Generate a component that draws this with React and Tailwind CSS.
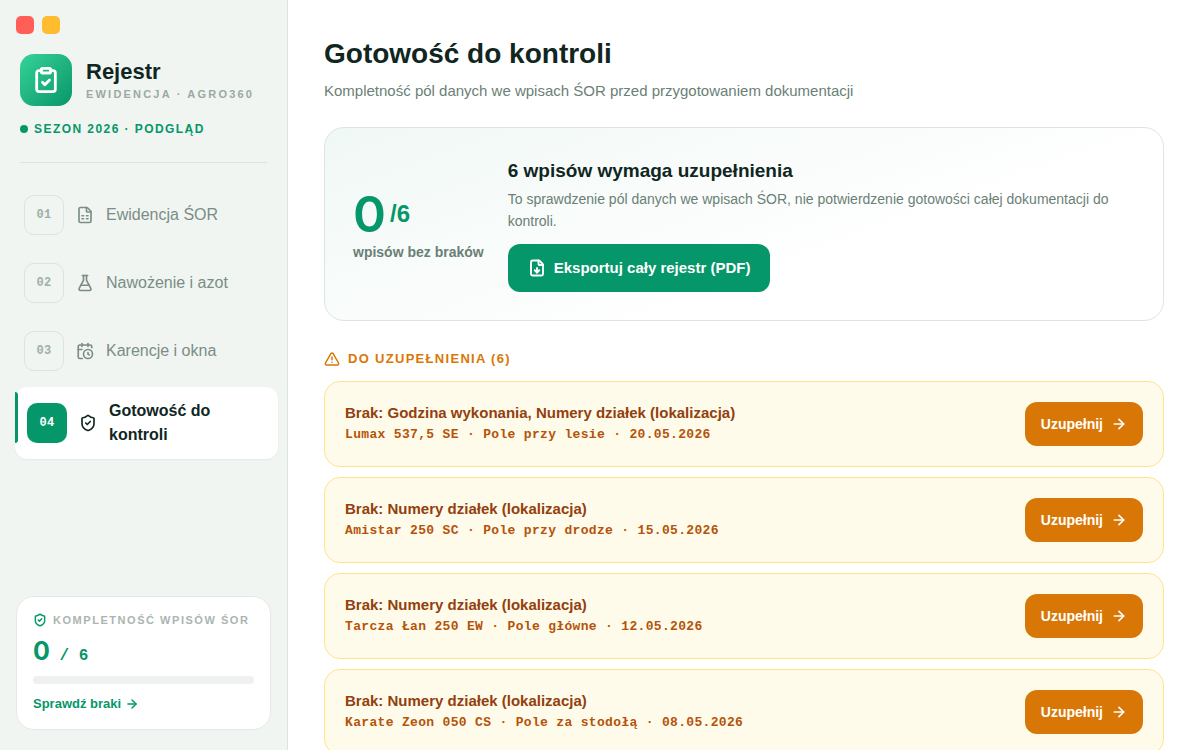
import React from "react";
import {
  ArrowRight,
  CalendarClock,
  ClipboardCheck,
  FileDown,
  FileSpreadsheet,
  FlaskConical,
  ShieldCheck,
  TriangleAlert,
} from "lucide-react";

const NAV_ITEMS = [
  { no: "01", label: "Ewidencja ŚOR", icon: FileSpreadsheet },
  { no: "02", label: "Nawożenie i azot", icon: FlaskConical },
  { no: "03", label: "Karencje i okna", icon: CalendarClock },
  { no: "04", label: "Gotowość do kontroli", icon: ShieldCheck, active: true },
];

const ENTRIES = [
  {
    missing: "Godzina wykonania, Numery działek (lokalizacja)",
    details: "Lumax 537,5 SE · Pole przy lesie · 20.05.2026",
  },
  {
    missing: "Numery działek (lokalizacja)",
    details: "Amistar 250 SC · Pole przy drodze · 15.05.2026",
  },
  {
    missing: "Numery działek (lokalizacja)",
    details: "Tarcza Łan 250 EW · Pole główne · 12.05.2026",
  },
  {
    missing: "Numery działek (lokalizacja)",
    details: "Karate Zeon 050 CS · Pole za stodołą · 08.05.2026",
  },
];

const COMPLETE = 0;
const TOTAL = 6;

function NavItem({ no, label, icon: Icon, active }) {
  return (
    <li>
      <a
        href="#"
        aria-current={active ? "page" : undefined}
        className={
          active
            ? "relative flex items-center gap-3 rounded-xl bg-white py-3 pr-4 pl-3 font-bold text-[#10261f] shadow-xs"
            : "flex items-center gap-3 rounded-xl py-3 pr-4 pl-[9px] text-[#7b8d85]"
        }
      >
        {active && (
          <span className="absolute top-[5px] left-0 h-[51px] w-[3px] rounded-r-full bg-[#059669]" />
        )}
        <span
          className={
            active
              ? "flex size-10 shrink-0 items-center justify-center rounded-[10px] bg-[#059669] font-['Liberation_Mono',monospace] text-xs font-bold tracking-wide text-white"
              : "flex size-10 shrink-0 items-center justify-center rounded-[10px] border border-[#dbe3df] font-['Liberation_Mono',monospace] text-xs font-bold tracking-wide text-[#9fb0a8]"
          }
        >
          {no}
        </span>
        <Icon className="size-[18px] shrink-0" strokeWidth={2.2} />
        <span className="text-base">{label}</span>
      </a>
    </li>
  );
}

function Sidebar() {
  return (
    <aside className="flex h-full w-72 shrink-0 flex-col border-r border-[#dbe3df] bg-[#f0f5f2]">
      <div className="flex gap-2 px-4 pt-4">
        <span className="size-[18px] rounded-[5px] bg-[#ff5f57]" />
        <span className="size-[18px] rounded-[5px] bg-[#febc2e]" />
      </div>

      <div className="mx-5 border-b border-[#dbe3df] pt-5 pb-6">
        <div className="flex items-center gap-[14px]">
          <span className="flex size-[52px] items-center justify-center rounded-[14px] bg-linear-to-br from-[#34d399] to-[#059669] text-white">
            <ClipboardCheck className="size-7" strokeWidth={2.4} />
          </span>
          <div>
            <div className="text-[22px] leading-7 font-bold text-[#10261f]">Rejestr</div>
            <div className="text-[11px] leading-4 font-bold tracking-[0.2em] text-[#9aaaa2]">
              EWIDENCJA · AGRO360
            </div>
          </div>
        </div>
        <div className="mt-[14px] flex items-center gap-[6px] text-xs leading-[18px] font-bold tracking-[0.12em] text-[#059669]">
          <span className="size-2 rounded-full bg-[#059669]" />
          SEZON 2026 · PODGLĄD
        </div>
      </div>

      <nav className="flex-1 pt-5 pr-[9px] pl-[15px]">
        <ul className="flex flex-col gap-1">
          {NAV_ITEMS.map((item) => (
            <NavItem key={item.no} {...item} />
          ))}
        </ul>
      </nav>

      <section className="mx-4 mb-5 rounded-[18px] border border-[#e3eae6] bg-white px-4 pt-4 pb-[15px]">
        <div className="flex items-center gap-[6px] text-[11px] leading-[14px] font-bold tracking-[0.14em] whitespace-nowrap text-[#aab5b0]">
          <ShieldCheck className="size-[14px] shrink-0 text-[#059669]" strokeWidth={2.5} />
          KOMPLETNOŚĆ WPISÓW ŚOR
        </div>
        <div className="mt-2 font-['Inter',sans-serif] text-[25px] leading-[33px] font-bold text-[#059669]">
          {COMPLETE}
          <span className="font-['Liberation_Mono',monospace] text-base whitespace-pre"> / {TOTAL}</span>
        </div>
        <div className="mt-2 h-2 rounded-full bg-[#eff1f0]">
          <div
            className="h-2 rounded-full bg-[#059669]"
            style={{ width: `${(COMPLETE / TOTAL) * 100}%` }}
          />
        </div>
        <a href="#" className="mt-[10px] flex items-center gap-1 text-[13px] leading-5 font-bold text-[#059669]">
          Sprawdź braki
          <ArrowRight className="size-[14px]" strokeWidth={2.5} />
        </a>
      </section>
    </aside>
  );
}

function Summary() {
  return (
    <section className="mt-6 flex items-center gap-6 rounded-[20px] border border-[#dbe6e1] bg-linear-160 from-[#f0f8f5] to-white to-65% p-7">
      <div className="shrink-0">
        <div className="flex items-center gap-1 font-bold text-[#059669]">
          <span className="font-['Inter',sans-serif] text-[50px] leading-[56px] font-semibold">{COMPLETE}</span>
          <span className="text-2xl">/{TOTAL}</span>
        </div>
        <div className="text-sm font-bold text-[#6b7f76]">wpisów bez braków</div>
      </div>
      <div>
        <h2 className="text-[19px] leading-[30px] font-bold text-[#10261f]">
          {TOTAL} wpisów wymaga uzupełnienia
        </h2>
        <p className="mt-[2px] text-sm leading-[22px] text-[#6b7f76]">
          To sprawdzenie pól danych we wpisach ŚOR, nie potwierdzenie gotowości całej dokumentacji do
          kontroli.
        </p>
        <button
          type="button"
          className="mt-3 flex h-12 items-center gap-2 rounded-xl bg-[#059669] px-5 text-[15px] font-bold text-white"
        >
          <FileDown className="size-[18px]" strokeWidth={2.5} />
          Eksportuj cały rejestr (PDF)
        </button>
      </div>
    </section>
  );
}

function EntryCard({ missing, details }) {
  return (
    <li className="flex items-center justify-between rounded-2xl border border-[#fde68a] bg-[#fffbeb] p-5">
      <div>
        <h3 className="text-[15px] leading-[22px] font-bold text-[#92400e]">Brak: {missing}</h3>
        <p className="font-['Liberation_Mono',monospace] text-[13px] leading-[22px] font-bold tracking-wide text-[#b45309]">
          {details}
        </p>
      </div>
      <button
        type="button"
        className="flex h-11 items-center gap-2 rounded-xl bg-[#d97706] px-4 text-sm font-bold text-white"
      >
        Uzupełnij
        <ArrowRight className="size-4" strokeWidth={2.5} />
      </button>
    </li>
  );
}

export default function App() {
  return (
    <div className="flex h-screen overflow-hidden bg-white font-['Liberation_Sans',Arial,sans-serif]">
      <Sidebar />
      <main className="min-w-0 flex-1 overflow-y-auto px-9 py-8 [scrollbar-width:none]">
        <h1 className="text-[28px] leading-[43px] font-bold text-[#10261f]">Gotowość do kontroli</h1>
        <p className="mt-1 text-[15px] leading-6 text-[#6b7f76]">
          Kompletność pól danych we wpisach ŚOR przed przygotowaniem dokumentacji
        </p>

        <Summary />

        <section className="mt-7">
          <h2 className="flex items-center gap-2 text-[13px] leading-5 font-bold tracking-widest text-[#d97706]">
            <TriangleAlert className="size-4" strokeWidth={2.25} />
            DO UZUPEŁNIENIA ({TOTAL})
          </h2>
          <ul className="mt-3 flex flex-col gap-[10px]">
            {ENTRIES.map((entry) => (
              <EntryCard key={entry.details} {...entry} />
            ))}
          </ul>
        </section>
      </main>
    </div>
  );
}
